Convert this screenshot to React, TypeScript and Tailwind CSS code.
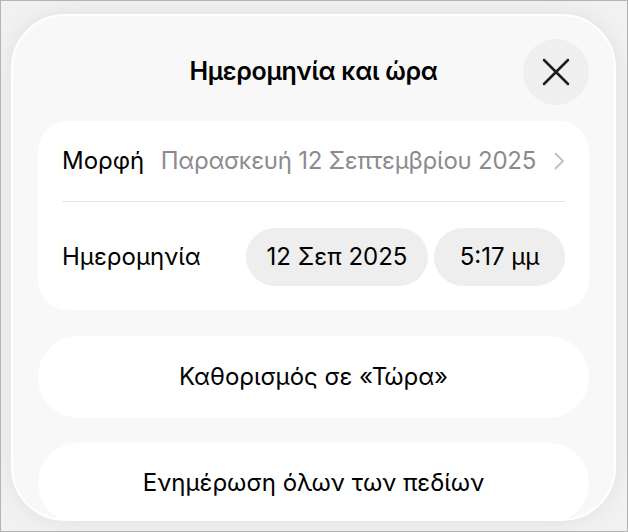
import React from "react";

const font = { fontFamily: "Inter, 'Noto Sans', 'DejaVu Sans', sans-serif" };

function CloseIcon() {
  return (
    <svg width="28" height="28" viewBox="0 0 28 28" fill="none">
      <path d="M2 2 L26 26 M26 2 L2 26" stroke="#1c1c1e" strokeWidth="2.5" strokeLinecap="round" />
    </svg>
  );
}

function Chevron() {
  return (
    <svg width="11" height="18" viewBox="0 0 11 18" fill="none">
      <path d="M1.5 1.5 L9 9 L1.5 16.5" stroke="#c2c2c6" strokeWidth="2" strokeLinecap="round" strokeLinejoin="round" />
    </svg>
  );
}

export default function App() {
  return (
    <div
      className="w-[628px] h-[532px] border border-[#b4b4b4] bg-[#f1f1f1] overflow-hidden text-black"
      style={font}
    >
      <div className="ml-[10px] mt-[13px] w-[605px] h-[507px] rounded-[54px] border-2 border-white bg-[#f8f8f8] shadow-[0_0_22px_rgba(0,0,0,0.07)] overflow-hidden px-[25px]">
        {/* header */}
        <div className="grid grid-cols-[66px_1fr_66px] items-center pt-[23px]">
          <div />
          <div className="text-center text-[25px] font-semibold tracking-[-0.3px]">Ημερομηνία και ώρα</div>
          <button className="w-[66px] h-[66px] rounded-full bg-[#efefef] flex items-center justify-center">
            <CloseIcon />
          </button>
        </div>

        {/* format and date card */}
        <div className="mt-[16px] rounded-[30px] bg-white">
          <div className="h-[80px] px-[24px] flex items-center justify-between">
            <span className="text-[24px]">Μορφή</span>
            <div className="flex items-center gap-[18px]">
              <span className="text-[24px] tracking-[-0.25px] text-[#8b8b8f]">Παρασκευή 12 Σεπτεμβρίου 2025</span>
              <Chevron />
            </div>
          </div>
          <div className="mx-[24px] h-px bg-[#e3e3e5]" />
          <div className="pt-[26px] pb-[24px] px-[24px] flex items-center justify-between">
            <span className="text-[24px]">Ημερομηνία</span>
            <div className="flex items-center gap-[6px]">
              <div className="h-[58px] w-[182px] rounded-full bg-[#eeeeee] flex items-center justify-center text-[24px]">
                12 Σεπ 2025
              </div>
              <div className="h-[58px] w-[131px] rounded-full bg-[#eeeeee] flex items-center justify-center text-[24px]">
                5:17 μμ
              </div>
            </div>
          </div>
        </div>

        {/* actions */}
        <button className="mt-[26px] w-full h-[82px] rounded-full bg-white flex items-center justify-center text-[24px]">
          Καθορισμός σε «Τώρα»
        </button>
        <button className="mt-[25px] w-full h-[80px] rounded-[40px] bg-white flex items-center justify-center text-[24px]">
          Ενημέρωση όλων των πεδίων
        </button>
      </div>
    </div>
  );
}
